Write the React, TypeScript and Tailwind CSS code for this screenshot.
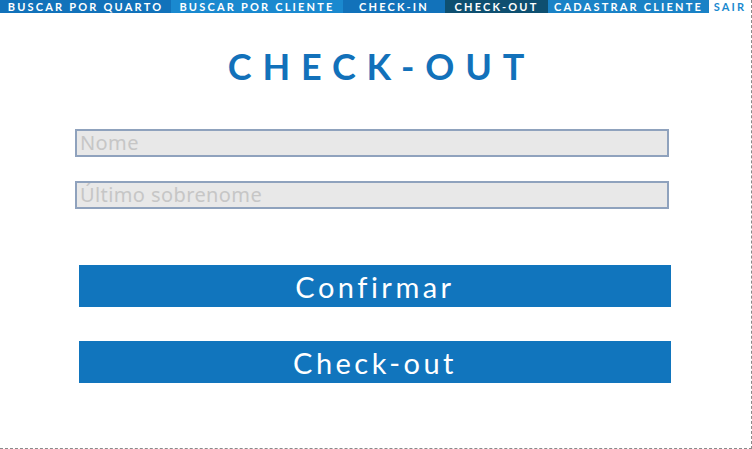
import React from "react";

const navItems = [
  { label: "BUSCAR POR QUARTO", w: "w-[171px]", cls: "bg-[#1272ba] text-white" },
  { label: "BUSCAR POR CLIENTE", w: "w-[172px]", cls: "bg-[#1a89cf] text-white" },
  { label: "CHECK-IN", w: "w-[102px]", cls: "bg-[#1272ba] text-white" },
  { label: "CHECK-OUT", w: "w-[103px]", cls: "bg-[#0e4f70] text-white" },
  { label: "CADASTRAR CLIENTE", w: "w-[161px]", cls: "bg-[#1a82c6] text-white" },
  { label: "SAIR", w: "flex-1", cls: "bg-white text-[#1a89cf]" },
];

export default function App() {
  return (
    <div className="w-[752px] h-[449px] bg-white border-r border-b border-dashed border-[#8a8a8a] overflow-hidden font-['Lato',sans-serif]">
      <nav className="flex h-[13px]">
        {navItems.map((n) => (
          <div
            key={n.label}
            className={`${n.w} ${n.cls} h-full flex items-center justify-center text-[11px] font-bold tracking-[0.2em] leading-none whitespace-nowrap`}
          >
            {n.label}
          </div>
        ))}
      </nav>
      <h1 className="mt-[33px] text-center text-[36px] font-bold text-[#1271ba] tracking-[0.3em] leading-[40px] pl-[12px]">
        CHECK-OUT
      </h1>
      <div className="mt-[43px] pl-[75px] flex flex-col gap-[24px]">
        <input
          placeholder="Nome"
          className="w-[594px] h-[28px] bg-[#e8e8e8] border-2 border-[#8fa2bd] px-[3px] text-[20px] font-['Noto_Sans',sans-serif] tracking-[0.02em] placeholder:text-[#c6c6c6] outline-none"
        />
        <input
          placeholder="Último sobrenome"
          className="w-[594px] h-[28px] bg-[#e8e8e8] border-2 border-[#8fa2bd] px-[3px] text-[20px] font-['Noto_Sans',sans-serif] tracking-[0.02em] placeholder:text-[#c6c6c6] outline-none"
        />
      </div>
      <div className="mt-[56px] pl-[79px] flex flex-col gap-[34px]">
        <button className="w-[592px] h-[42px] bg-[#1175bd] text-white text-[29px] tracking-[0.12em] leading-none flex items-center justify-center">
          Confirmar
        </button>
        <button className="w-[592px] h-[42px] bg-[#1175bd] text-white text-[29px] tracking-[0.12em] leading-none flex items-center justify-center">
          Check-out
        </button>
      </div>
    </div>
  );
}
